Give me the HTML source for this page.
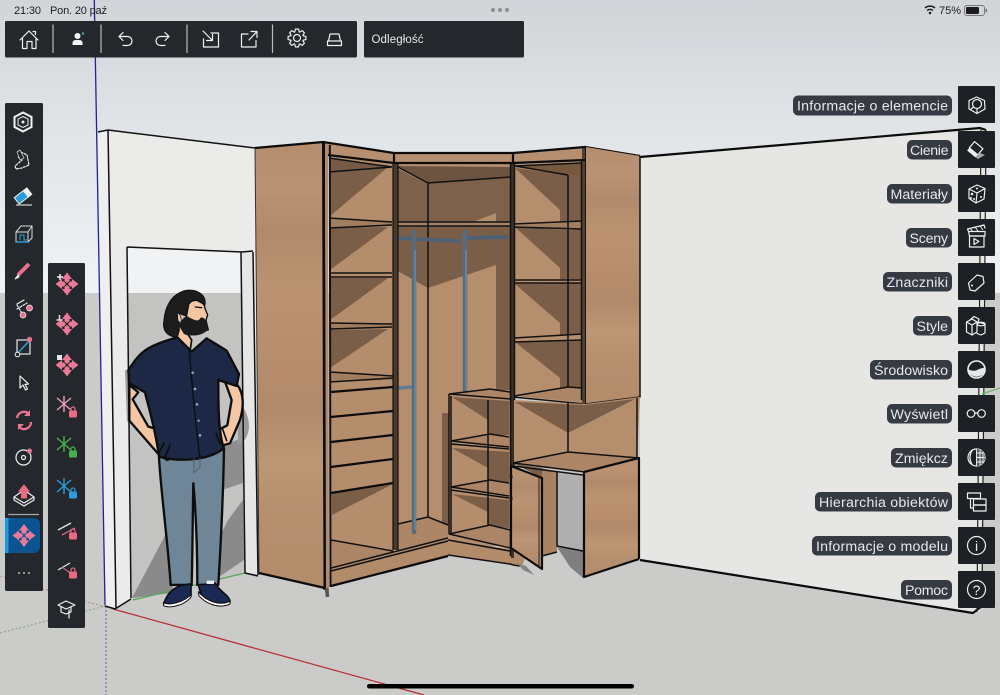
<!DOCTYPE html>
<html><head><meta charset="utf-8"><style>
html,body{margin:0;padding:0;width:1000px;height:695px;overflow:hidden;background:#ccc}
svg{display:block}
text{font-family:"Liberation Sans",sans-serif}
.l{font-size:14.2px;fill:#e6e8ea}
.w{fill:none;stroke:#eef0f1;stroke-width:1.2;stroke-linecap:round;stroke-linejoin:round}
.k{fill:none;stroke:#111;stroke-width:1.5;stroke-linejoin:round}
.K{fill:none;stroke:#0c0c0c;stroke-width:2.2;stroke-linejoin:round}
.s{fill:#7a5e48}
</style></head><body>
<svg width="1000" height="695" viewBox="0 0 1000 695" xmlns="http://www.w3.org/2000/svg">
<defs>
<linearGradient id="sky" x1="0" y1="0" x2="0" y2="1"><stop offset="0" stop-color="#d1d5d9"/><stop offset=".5" stop-color="#e2e6e9"/><stop offset="1" stop-color="#f0f2f4"/></linearGradient>
<linearGradient id="wood" x1="0" y1="0" x2="0" y2="1"><stop offset="0" stop-color="#b48d6e"/><stop offset=".1" stop-color="#b99373"/><stop offset=".2" stop-color="#b08a6b"/><stop offset=".33" stop-color="#bb9372"/><stop offset=".45" stop-color="#b88f6d"/><stop offset=".6" stop-color="#b18a6b"/><stop offset=".72" stop-color="#bd9675"/><stop offset=".85" stop-color="#b58e6e"/><stop offset="1" stop-color="#b38c6c"/></linearGradient>
<g id="mv"><path fill="#ea7a98" d="M0-11.500 5-5 2.500-5 2.500-3 0-1-2.500-3-2.500-5-5-5ZM0 11.500 5 5 2.500 5 2.500 3 0 1-2.500 3-2.500 5-5 5ZM-11.500 0-5-5-5-2.500-3-2.500-1 0-3 2.500-5 2.500-5 5ZM11.500 0 5-5 5-2.500 3-2.500 1 0 3 2.500 5 2.500 5 5Z"/></g>
<g id="star"><path d="M-7-6 7 6M-7 6 7-6M0-8V8" fill="none" stroke-width="1.400"/></g>
<g id="lock"><rect x="-3.500" y="-1" width="7" height="6" rx="1"/><path d="M-2-1V-3a2 2 0 0 1 4 0V-1" fill="none" stroke-width="1.200"/></g>
</defs>

<rect width="1000" height="293" fill="url(#sky)"/>
<rect y="293" width="1000" height="402" fill="#cbcbca"/>

<!-- axes -->
<path d="M0 633 105 606" stroke="#7fa57f" stroke-width="1" stroke-dasharray="2 2" fill="none"/>
<path d="M0 576 105 607" stroke="#b58a8a" stroke-width="1" stroke-dasharray="2 2" fill="none"/>
<path d="M106 606V695" stroke="#5a5ab8" stroke-width="1" stroke-dasharray="2 2" fill="none"/>
<path d="M113 609 424 695" stroke="#b92f35" stroke-width="1.300" fill="none"/>

<!-- right wall -->
<polygon points="640,157 985,128 985,300 980,612 973,612 640,560" fill="#e6e6e4"/>
<path d="M640 157 980 128 986 130M640 560 973 613 982 606" class="K" stroke-width="2"/>
<path d="M981 128 977 612M986 130 982 606" stroke="#222" stroke-width="1.200" fill="none"/>
<path d="M982 394 1000 388" stroke="#6fb36f" stroke-width="1.200" fill="none"/>

<!-- left wall -->
<polygon points="98,132 108,130 255,148 259,573 245,573 241,252 127,247 131,598 115,608 105,605" fill="#ebebea"/>
<polygon points="98,132 108,130 116,607 105,605" fill="#efefef"/>
<polygon points="127,247 242,252 245,573 132,600" fill="#f0f2f4"/>
<polygon points="127,293 242,293 245,573 132,600" fill="#c3c3c2"/>
<polygon points="242,252 253,251 258,574 245,573" fill="#e6e6e5"/>
<polygon points="132,598 168,530 175,560 172,593" fill="#8a8a8a"/>
<polygon points="200,577 228,520 243,500 244,560 216,579" fill="#8a8a8a"/>
<polygon points="223,445 243,438 243,483 222,490" fill="#8e8e8e"/>
<path d="M238 400 C255 420 250 440 238 445Z" fill="#999"/>
<polygon points="125,370 128,370 130,420 127,422" fill="#999"/>
<path d="M133 600 245 573" stroke="#58a858" stroke-width="1.300" fill="none"/>
<path d="M98 132 108 130 255 148M105 606 115 609 131 599M108 130 116 608M127 247 242 252M127 247 131 598M241 252 245 573 258 576M253 252 258 575M242 252 253 251" class="k" stroke-width="1.700"/>
<path d="M94.300 0 105 605" stroke="#22229c" stroke-width="1.300" fill="none"/>

<!-- wardrobe left side -->
<polygon points="255,148 323,142 325,588 259,573" fill="url(#wood)"/>
<!-- top strips -->
<polygon points="328,142 394,153 513,153 585,148 585,160 513,163 394,163 328,155" fill="#b68f70"/>
<!-- left compartment -->
<polygon points="329,155 394,164 394,552 330,568" fill="#b48d6c"/>
<polygon points="329,158 392,167 330,172" fill="#765a45"/>
<polygon class="s" points="329,172 388,167 329,217"/>
<polygon class="s" points="330,228 388,227 330,270"/>
<polygon class="s" points="330,278 388,278 330,320"/>
<polygon class="s" points="330,330 388,329 330,368"/>
<polygon points="329,218 392,222 392,226 329,228" fill="#a27e60"/>
<polygon points="330,324 392,324 392,327 330,329" fill="#a27e60"/>
<polygon points="330,372 393,376 393,380 330,382" fill="#a27e60"/>
<polygon class="s" points="332,494 393,484 332,515"/>
<polygon points="331,540 393,552 332,566" fill="#ab8566"/>
<path d="M329 158 392 167M329 172 392 167M329 218 392 222M329 228 392 225M330 273H392M330 277H392M330 323 392 324M330 329 392 327M330 372 393 376M330 382 393 378" class="k"/>
<path d="M331 392 393 387M331 417 393 411M331 442 393 435M331 467 393 459M331 493 393 483" class="K"/>
<path d="M331 540 393 551" class="k" stroke-width="1"/>
<!-- center compartment -->
<polygon points="396,163 512,163 512,545 396,552" fill="#b58e6d"/>
<polygon points="396,166 510,167 510,177 428,184" fill="#6d5341"/>
<polygon points="396,168 428,184 510,177 510,222 396,222" fill="#7d614b"/>
<polygon points="396,226 510,226 510,390 496,390 496,265 428,288 396,270" fill="#7a5e48"/>
<polygon points="473,222 496,213 496,222" fill="#b38c6c"/>
<polygon points="396,222 510,222 510,226 396,227" fill="#a88264"/>
<polygon class="s" points="442,413 449,413 449,525 442,522"/>
<polygon points="398,524 428,517 448,525 448,540 398,551" fill="#ac8666"/>
<path d="M396 166 428 183 510 177M396 222H510M396 226H510M428 183V517M398 524 428 517 448 525" class="k" stroke-width="1"/>
<!-- plinth -->
<polygon points="331,568 448,538 448,556 331,586" fill="#b28b6b"/>
<path d="M331 568 448 538M331 571 448 541M331 586 448 556" class="k"/>
<!-- rods -->
<path d="M396 238 460 241M466 238 508 237" stroke="#4f6172" stroke-width="4" fill="none"/>
<path d="M398 388 414 387" stroke="#5f7c97" stroke-width="3.500" fill="none"/>
<path d="M414 232V532M465 232V392" stroke="#566b7e" stroke-width="4.500" stroke-linecap="round" fill="none"/>
<path d="M415 250V530M466 250V390" stroke="#6f8aa3" stroke-width="1.500" fill="none"/>
<!-- left post & divider -->
<path d="M323.500 142 325 590" stroke="#0c0c0c" stroke-width="3" fill="none"/>
<path d="M326.500 143 327.500 596" stroke="#b08a6a" stroke-width="3" fill="none"/>
<path d="M329.800 145 330.500 587" stroke="#111" stroke-width="2" fill="none"/>
<path d="M326.500 588 327.500 597" stroke="#555" stroke-width="3.500" fill="none"/>
<rect x="393" y="163" width="5" height="387" fill="#4a3a2d"/>
<path d="M393 163V550M398 163V550" stroke="#111" stroke-width="1.200" fill="none"/>
<!-- small unit -->
<polygon points="449,394 509,398 509,547 449,534" fill="#b48d6c"/>
<polygon class="s" points="452,397 509,401 509,435 488,435 488,420"/>
<polygon class="s" points="452,448 509,452 509,482 488,481 488,468"/>
<polygon class="s" points="452,494 509,500 509,528 488,526 488,512"/>
<polygon points="449,394 490,389 510,392 510,399" fill="#ab8566"/>
<polygon points="451,441 490,434 509,437 509,447" fill="#ab8566"/>
<polygon points="451,487 490,480 509,483 509,496" fill="#ab8566"/>
<polygon points="449,534 490,525 510,530 510,548" fill="#ab8566"/>
<polygon points="448,540 510,549 526,556 522,566 510,564 448,555" fill="#b28b6b"/>
<path d="M449 394 490 389 510 392M449 394 510 399M488 400V525M451 441 490 434 509 437M451 441 509 447M451 444 509 449M451 487 490 480 509 483M451 487 509 496M451 490 509 498M449 534 490 525 510 530M449 534 510 548M448 540 510 551M448 555 510 564Q516 566 522 566M449 394V534M451 396V534" class="k" stroke-width="1.200"/>
<!-- upper right compartment -->
<polygon points="514,163 585,160 585,403 514,396" fill="#b58e6d"/>
<polygon points="515,166 582,163 582,176 568,175" fill="#76593f"/>
<polygon class="s" points="515,168 568,175 582,175 582,221 560,221 560,210"/>
<polygon class="s" points="515,227 568,230 582,229 582,279 560,279 560,268"/>
<polygon class="s" points="515,284 582,283 582,334 560,335 560,323"/>
<polygon class="s" points="515,342 582,340 582,388 560,388 560,378"/>
<polygon points="514,225 582,222 582,229 568,230" fill="#a27e60"/>
<polygon points="514,396 568,387 582,388 585,402" fill="#ab8566"/>
<path d="M515 166 568 175M568 175V387M514 224 582 221M514 227 582 229M514 280 582 280M514 283H582M514 338 582 334M514 342 582 340M514 396 568 387 582 388M513 397 585 404M515 166 582 163" class="k" stroke-width="1.200"/>
<rect x="511" y="163" width="3" height="395" fill="#3e3024"/>
<path d="M510.500 163V556M514.500 163V465" class="k" stroke-width="1.200"/>
<rect x="582" y="148" width="4" height="256" fill="#55412f"/>
<path d="M581.500 160V400M585.800 148V404" class="k" stroke-width="1.200"/>
<path d="M255 148 323 142 394 153 513 153 585 147 640 156M394 153V163M513 153V163M328 155 394 163 513 163 585 160" class="K" stroke-width="1.800"/>
<path d="M259 573 325 588M331 586 448 556" class="K"/>
<path d="M255 148 259 573" stroke="#333" stroke-width="1" fill="none"/>
<!-- right upper panel -->
<polygon points="586,147 640,156 640,397 586,404" fill="url(#wood)"/>
<path d="M640 156V397L586 404" class="k"/>
<!-- desk -->
<polygon points="514,400 585,404 640,397 637,458 568,452 514,462" fill="#b58e6d"/>
<polygon class="s" points="515,402 585,405 635,399 568,433"/>
<path d="M568 403V452M637 398V458" class="k"/>
<polygon points="542,468 557,472 557,552 542,556" fill="#a88263"/>
<polygon points="515,464 542,468 542,478" fill="#7a5e48"/>
<polygon points="557,473 583,475 583,551 557,546" fill="#afafb0"/>
<polygon points="557,547 583,551 583,578 570,567" fill="#7f7f7f"/>
<polygon points="517,563 526,566 534,575 523,570" fill="#868686"/>
<polygon points="513,463 568,452 639,458 585,471 545,468" fill="#ab8566"/>
<path d="M513 463 568 452 639 458M513 463 585 472M513 466 583 475M557 472V546L583 551M542 556 557 552" class="k"/>
<polygon points="584,472 639,458 639,559 584,577" fill="url(#wood)"/>
<path d="M584 472 639 458 639 559M584 472V577L639 559" class="K" stroke-width="1.800"/>
<polygon points="511,466 542,478 542,569 511,548" fill="url(#wood)"/>
<path d="M511 466 542 478 542 569 511 548Z" class="K" stroke-width="1.800"/>
<path d="M539 477V567" stroke="#222" stroke-width="1" fill="none"/>
<path d="M511 475V478M511 497V500" stroke="#111" stroke-width="3" fill="none"/>

<!-- person -->
<g transform="translate(90 230) scale(.3333)" stroke-linejoin="round" stroke-linecap="round">
<path d="M207 680 C210 760 235 950 242 1065 L305 1065 C308 960 308 850 310 760 C318 850 322 960 322 1065 L385 1065 C392 950 400 780 402 655 Z" fill="#6f8699" stroke="#0d0d0d" stroke-width="7"/>
<path d="M222 1118 C235 1085 255 1065 303 1062 L303 1098 C280 1122 245 1132 222 1126Z" fill="#1b2a55" stroke="#0d0d0d" stroke-width="5"/>
<path d="M220 1118 C240 1128 275 1118 303 1095 L303 1102 C280 1128 240 1135 222 1128Z" fill="#fff" stroke="#0d0d0d" stroke-width="3"/>
<path d="M325 1065 L375 1060 C395 1090 420 1098 420 1116 C400 1132 360 1125 335 1098Z" fill="#1b2a55" stroke="#0d0d0d" stroke-width="5"/>
<path d="M325 1085 C350 1115 390 1128 420 1114 L420 1122 C395 1135 355 1128 327 1098Z" fill="#fff" stroke="#0d0d0d" stroke-width="3"/>
<rect x="350" y="1052" width="22" height="10" fill="#eee"/>
<path d="M118 465 L145 487 L128 508 L175 590 L210 600 L255 648 L240 660 L250 680 L232 690 L205 672 L118 572 Z" fill="#f4c6a4" stroke="#0d0d0d" stroke-width="7"/>
<path d="M405 455 L442 465 C462 490 462 530 450 570 L420 640 L392 648 L370 608 L412 586 L425 510Z" fill="#f4c6a4" stroke="#0d0d0d" stroke-width="7"/>
<path d="M262 250 L285 300 L305 330 L300 365 L258 325Z" fill="#f4c6a4" stroke="#0d0d0d" stroke-width="5"/>
<path d="M262 322 C160 350 150 370 115 420 L118 460 L165 487 C175 530 195 590 207 680 C260 695 350 695 402 655 C385 610 385 530 385 450 L440 468 L447 432 L410 362 L350 325 L305 365Z" fill="#1c2845" stroke="#0d0d0d" stroke-width="7"/>
<path d="M298 365 C305 450 318 600 330 683" fill="none" stroke="#0d0d0d" stroke-width="4"/>
<g fill="#93a2bd"><circle cx="308" cy="428" r="4"/><circle cx="315" cy="477" r="4"/><circle cx="321" cy="523" r="4"/><circle cx="326" cy="572" r="3.500"/><circle cx="330" cy="616" r="4"/></g>
<path d="M222 640 L205 672M240 645 L225 682M378 612 L392 642M398 598 L410 632" stroke="#0d0d0d" stroke-width="5" fill="none"/>
<path d="M312 686 L312 728 L330 712 L330 686" fill="none" stroke="#4d6173" stroke-width="3"/>
<path d="M292 225 C305 205 340 205 345 235 L353 255 L348 270 L355 300 L300 310 L288 270Z" fill="#f4c6a4" stroke="#0d0d0d" stroke-width="4"/>
<path d="M262 322 C235 320 215 305 222 270 C225 235 240 195 285 182 C320 175 350 195 345 225 L312 207 L297 222 L290 258 L265 250 L268 300 Z" fill="#1c1c1c" stroke="#0d0d0d" stroke-width="3"/>
<path d="M265 285 C275 275 285 250 297 262 C310 268 325 278 331 264 C340 258 352 270 354 298 C335 322 295 318 282 312Z" fill="#1b1b1b"/>
<path d="M316 231 L335 233" stroke="#0d0d0d" stroke-width="4"/>
<path d="M262 248 C272 252 276 268 272 280 L264 272Z" fill="#f4c6a4" stroke="#0d0d0d" stroke-width="2"/>
</g>

<!-- status bar -->
<text x="14" y="14" font-size="11" fill="#1c1c1e" textLength="27">21:30</text>
<text x="50" y="14" font-size="11" fill="#1c1c1e" textLength="57">Pon. 20 paź</text>
<g fill="#8e9093"><circle cx="493" cy="10" r="2"/><circle cx="500" cy="10" r="2"/><circle cx="507" cy="10" r="2"/></g>
<path d="M925 8a7.500 7.500 0 0 1 10 0M927 10.500a4.500 4.500 0 0 1 6 0" fill="none" stroke="#1c1c1e" stroke-width="1.500"/><circle cx="930" cy="13" r="1.300" fill="#1c1c1e"/>
<text x="939" y="14" font-size="11" fill="#1c1c1e" textLength="22">75%</text>
<rect x="964.500" y="5.500" width="20" height="10" rx="2.500" fill="none" stroke="#77797c"/><rect x="966" y="7" width="13" height="7" rx="1.200" fill="#1c1c1e"/><rect x="985.500" y="8.500" width="1.500" height="4" rx=".7" fill="#77797c"/>

<!-- top toolbar -->
<rect x="5" y="21" width="352" height="36.500" rx="1.500" fill="#24282c"/>
<rect x="364" y="21" width="160" height="36.500" rx="1.500" fill="#24282c"/>
<text x="371.500" y="43" font-size="11.500" fill="#e6e8ea" textLength="52">Odległość</text>
<path d="M53 24.500V53M101 24.500V53M187 24.500V53M272.500 24.500V53" stroke="#b9bbbd" stroke-width="1.200" fill="none"/>
<path class="w" d="M20 40 29 31 38 40M22.500 38V48.500H27V41.500H32V48.500H36V38M33 31.500H35.500V34.500"/>
<circle cx="77.500" cy="36" r="3" fill="#f4f5f6"/><path d="M72.500 45V42.500Q73 40 76 40H79Q82 40 82.500 42.500V45Z" fill="#f4f5f6"/><circle cx="83" cy="33.500" r="1.300" fill="#3aa6a0"/>
<path class="w" d="M123 32.500 119 36.500 123 40.500M119.500 36.500H127.500a4.500 4.500 0 0 1 0 9H123"/>
<path class="w" d="M165 32.500 169 36.500 165 40.500M168.500 36.500H160.500a4.500 4.500 0 0 0 0 9H165"/>
<path class="w" d="M211 33H218.500V47H203.500V39M203 31 212.500 40.500M212.500 34.500V40.500H206.500"/>
<path class="w" d="M248 34H241.500V47H256V40.500M249 40 257 31.500M251 31.500H257V37.500"/>
<path class="w" transform="translate(297 38)" d="M6.100-2.200 8.900-1.600 8.900 1.600 6.100 2.200 5.900 2.700 7.400 5.200 5.200 7.400 2.700 5.900 2.200 6.100 1.600 8.900-1.600 8.900-2.200 6.100-2.700 5.900-5.200 7.400-7.400 5.200-5.900 2.700-6.100 2.200-8.900 1.600-8.900-1.600-6.100-2.200-5.900-2.700-7.400-5.200-5.200-7.400-2.700-5.900-2.200-6.100-1.600-8.900 1.600-8.900 2.200-6.100 2.700-5.900 5.200-7.400 7.400-5.200 5.900-2.700Z"/>
<circle class="w" cx="297" cy="38" r="3.500"/>
<path class="w" d="M328.500 41 330 34H339L340.500 41ZM327.500 41H341.500V45.500H327.500Z"/>

<!-- left toolbar -->
<rect x="5" y="103" width="38" height="488" rx="1.500" fill="#24282c"/>
<rect x="48" y="263" width="37" height="365" rx="1.500" fill="#24282c"/>
<g transform="translate(23 122)"><path d="M0-9.500 8.500-5V5L0 9.500-8.500 5V-5Z" fill="none" stroke="#f2f3f4" stroke-width="2"/><path d="M0-5.500 5-3V3L0 5.500-5 3V-3Z" fill="none" stroke="#f2f3f4" stroke-width="1"/><circle r="1.500" fill="#f2f3f4"/></g>
<path class="w" d="M21 152 27 155 29 165 22 168 16 169 15 166 22 160 18 157Z" stroke-dasharray="2 1.500"/>
<path d="M17 152 20 150 24 158 20 160Z" fill="#24282c" stroke="#c9cbcd" stroke-width=".8"/>
<g transform="translate(23 196) rotate(-38)"><rect x="-8" y="-4" width="16" height="8" fill="#2d9bd8" stroke="#eef0f1"/><rect x="3" y="-4" width="5" height="8" fill="#eef0f1"/></g>
<path d="M16 205H32" stroke="#c9cbcd" stroke-width="1.300"/>
<path d="M16 232 21 226H32V238L28 242H16Z" fill="none" stroke="#d9dcdf"/><path d="M16 232H28V242M28 232 32 226" fill="none" stroke="#d9dcdf"/><path d="M20 240V235H24V240H27" fill="none" stroke="#2d9bd8"/><path d="M16 242H28" stroke="#2d9bd8" stroke-width="1.500"/>
<path d="M29 264 18 275" stroke="#e86f90" stroke-width="4"/><path d="M18 275 15 279 19 277Z" fill="#eee" stroke="#eee"/>
<path d="M17 309 27 303M17 305 23 315" class="w" stroke-dasharray="2 1.500"/><circle cx="29.500" cy="308" r="3" fill="#e86f90" stroke="#eee" stroke-width=".7"/><circle cx="23" cy="315" r="3" fill="#e86f90" stroke="#eee" stroke-width=".7"/><path d="M17 304 24 300" class="w"/>
<rect x="17" y="340" width="13" height="14" fill="none" stroke="#e6e8ea" stroke-width="1.200"/><path d="M17 354 30 340" stroke="#2d9bd8" stroke-width="1.500"/><circle cx="29.500" cy="339.500" r="2.700" fill="#e86f90"/><circle cx="17.500" cy="354.500" r="2.300" fill="#24282c" stroke="#eee"/>
<path class="w" d="M20 376 20 388 23 385 25.500 390 27.500 389 25 384.500 28.500 384Z"/>
<path d="M17 418A7 7 0 0 1 29 414M31 422A7 7 0 0 1 19 427" fill="none" stroke="#e8768f" stroke-width="2.300"/><path d="M30 410V416H24ZM18 430V424H24Z" fill="#e8768f"/>
<circle class="w" cx="23.500" cy="457.500" r="7.500"/><circle class="w" cx="23.500" cy="457.500" r="2"/><circle cx="29.500" cy="451" r="2.500" fill="#e8768f"/>
<path class="w" d="M14 497 24 490 34 497 24 503ZM14 497V500L24 506 34 500V497"/><path d="M24 486 19 492H21.500V499H26.500V492H29Z" fill="#ea6a84" stroke="#ea6a84" transform="translate(0 -1)"/>
<path d="M8 514.500H39" stroke="#a4a6a8" stroke-width="1.300"/>
<path d="M5 518H33Q40 518 40 525V546Q40 553 33 553H5Z" fill="#0a5492"/><rect x="5" y="518" width="3.500" height="35" fill="#1d9bdc"/>
<use href="#mv" x="24" y="535.500"/>
<g fill="#d9dbdd"><circle cx="19" cy="573" r=".9"/><circle cx="24" cy="573" r=".9"/><circle cx="29" cy="573" r=".9"/></g>

<!-- second toolbar -->
<use href="#mv" x="67" y="284"/><path d="M57 277H63M60 274V280" stroke="#eee" stroke-width="1.500"/>
<use href="#mv" x="67" y="324"/><path d="M56.500 320H62.500M59.500 315V320" stroke="#ddd" stroke-width="1.500"/>
<use href="#mv" x="67" y="365"/><rect x="57" y="355" width="5" height="5" fill="#dfe6ee"/>
<g transform="translate(64 404)" stroke="#e8a0b4"><use href="#star"/></g><g transform="translate(73 412)" fill="#ea6a84" stroke="#ea6a84"><use href="#lock"/></g>
<g transform="translate(64 444)" stroke="#49b04f"><use href="#star"/></g><g transform="translate(73 452)" fill="#49b04f" stroke="#49b04f"><use href="#lock"/></g>
<g transform="translate(64 486)" stroke="#2d9bd8"><use href="#star"/></g><g transform="translate(73 493)" fill="#2d9bd8" stroke="#2d9bd8"><use href="#lock"/></g>
<path d="M58 530 71 523" stroke="#e6e8ea" stroke-width="1.300"/><path d="M62 535 75 528" stroke="#c46a85" stroke-width="1.300"/><g transform="translate(73 534)" fill="#ea6a84" stroke="#ea6a84"><use href="#lock"/></g>
<path d="M58 570 70 563" stroke="#e6e8ea" stroke-width="1.300"/><path d="M62 567 70 573" stroke="#c46a85" stroke-width="1.300"/><g transform="translate(73 573)" fill="#ea6a84" stroke="#ea6a84"><use href="#lock"/></g>
<path class="w" d="M58 605 66 601 75 605 66 609ZM61 607V612L66 614 71 612V607M69 610V618"/>

<!-- right panels -->
<g fill="#1d2024">
<rect x="958" y="86" width="37" height="37" rx="1"/><rect x="958" y="131" width="37" height="37" rx="1"/><rect x="958" y="175" width="37" height="37" rx="1"/><rect x="958" y="219" width="37" height="37" rx="1"/><rect x="958" y="263" width="37" height="37" rx="1"/><rect x="958" y="307" width="37" height="37" rx="1"/><rect x="958" y="351" width="37" height="37" rx="1"/><rect x="958" y="395" width="37" height="37" rx="1"/><rect x="958" y="439" width="37" height="37" rx="1"/><rect x="958" y="483" width="37" height="37" rx="1"/><rect x="958" y="527" width="37" height="37" rx="1"/><rect x="958" y="571" width="37" height="37" rx="1"/>
</g>
<g fill="#363a43">
<rect x="793" y="95.500" width="159" height="20" rx="5"/><rect x="907" y="140" width="45" height="19.500" rx="5"/><rect x="887" y="184" width="65" height="19.500" rx="5"/><rect x="906" y="228" width="46" height="19.500" rx="5"/><rect x="883" y="272" width="69" height="19.500" rx="5"/><rect x="913" y="316" width="39" height="19.500" rx="5"/><rect x="870" y="360" width="82" height="19.500" rx="5"/><rect x="887" y="404" width="65" height="19.500" rx="5"/><rect x="891" y="448" width="61" height="19.500" rx="5"/><rect x="815" y="492" width="137" height="19.500" rx="5"/><rect x="812" y="536" width="140" height="19.500" rx="5"/><rect x="901" y="580" width="51" height="19.500" rx="5"/>
</g>
<text class="l" x="797" y="110.500" textLength="151">Informacje o elemencie</text>
<text class="l" x="910" y="155" textLength="38.500">Cienie</text>
<text class="l" x="890.500" y="199" textLength="57.500">Materiały</text>
<text class="l" x="909.500" y="243" textLength="38.500">Sceny</text>
<text class="l" x="886.500" y="287" textLength="61.500">Znaczniki</text>
<text class="l" x="916.500" y="331" textLength="31.500">Style</text>
<text class="l" x="874" y="375" textLength="74">Środowisko</text>
<text class="l" x="890.500" y="419" textLength="57.500">Wyświetl</text>
<text class="l" x="895" y="463" textLength="53">Zmiękcz</text>
<text class="l" x="819" y="507" textLength="129">Hierarchia obiektów</text>
<text class="l" x="816" y="551" textLength="132">Informacje o modelu</text>
<text class="l" x="905" y="595" textLength="43">Pomoc</text>

<!-- right icons -->
<path class="w" d="M976.500 97 984.500 100.500 985 109 977 113.500 969 109 969 100.500Z"/><circle class="w" cx="977" cy="104" r="4.500"/><path class="w" d="M977 108.500V113.500M973.500 107 970.500 109.500"/>
<g transform="translate(975.500 149) rotate(40)"><rect x="-5.500" y="-5" width="11" height="8" class="w"/><rect x="-5.500" y="3" width="11" height="3.500" fill="#eef0f1"/></g>
<path d="M980 153 985 155 978 159 975 157Z" fill="#9fa2a5"/>
<path class="w" d="M977 185 985 188.500 984 199 976 203 969 198.500 969 189ZM969 189 977 193 985 188.500M977 193 976 203"/><g fill="#eef0f1"><circle cx="972" cy="194" r="1.300"/><circle cx="971" cy="198" r="1"/><circle cx="974" cy="199" r="1"/><circle cx="981" cy="197" r="1"/><circle cx="977" cy="188.500" r="1"/></g>
<rect class="w" x="969.500" y="236" width="14.500" height="11"/><path class="w" d="M968.500 231.500H985V236H969.500ZM968.500 231.500 967.500 229 984 225 985 228"/><path class="w" d="M974 238.500 979 241.500 974 244.500Z"/><path d="M970 228 973 232M975 227 978 231M980 226 983 230" stroke="#eef0f1"/>
<path class="w" d="M968.500 283 977 275 983 276.500 984 283 975 291 970 290Z"/><circle cx="972" cy="285.500" r="1" fill="#eef0f1"/>
<path class="w" d="M966.500 322 972 319 977 322V332L972 335 966.500 332ZM966.500 322 972 325 977 322M972 325V335M977 324 980 322.500 985 324V333L981 335 977 333.500"/><ellipse class="w" cx="981" cy="324" rx="4" ry="1.800"/><path class="w" d="M970 320 974 316.500 979 319 978 322"/>
<circle cx="976.500" cy="369.500" r="8.500" fill="none" stroke="#eef0f1" stroke-width="1.600"/><path d="M968 369Q973 372 977 370T985 367.500A8.500 8.500 0 0 1 968 369Z" fill="#e4e7ea"/>
<circle class="w" cx="971" cy="413.500" r="3.800"/><circle class="w" cx="981.500" cy="413.500" r="3.800"/><path class="w" d="M974.800 413H977.700"/>
<circle class="w" cx="976.500" cy="457.500" r="8.500"/><path d="M976.500 449A8.500 8.500 0 0 1 976.500 466Z" fill="#55585c"/><path d="M976.500 449V466M980 450V465M983 452V463M976.500 453H983M976.500 457.500H985M976.500 462H983" stroke="#eef0f1" stroke-width=".9"/><path class="w" d="M972 450.500Q968 457.500 972 464.500"/>
<rect class="w" x="967.500" y="493" width="13" height="5.500"/><rect class="w" x="973.500" y="499" width="12.500" height="6"/><rect class="w" x="973.500" y="505" width="12.500" height="6"/><path class="w" d="M970.500 498.500V508H973.500"/>
<circle class="w" cx="976.500" cy="545.500" r="9"/><text x="976.500" y="551" text-anchor="middle" font-size="14" fill="#eef0f1">i</text>
<circle class="w" cx="976.500" cy="589.500" r="9"/><text x="976.500" y="595" text-anchor="middle" font-size="14" fill="#eef0f1">?</text>

<!-- home indicator -->
<rect x="367" y="684" width="267" height="4.500" rx="2.250" fill="#000"/>
</svg>
</body></html>
